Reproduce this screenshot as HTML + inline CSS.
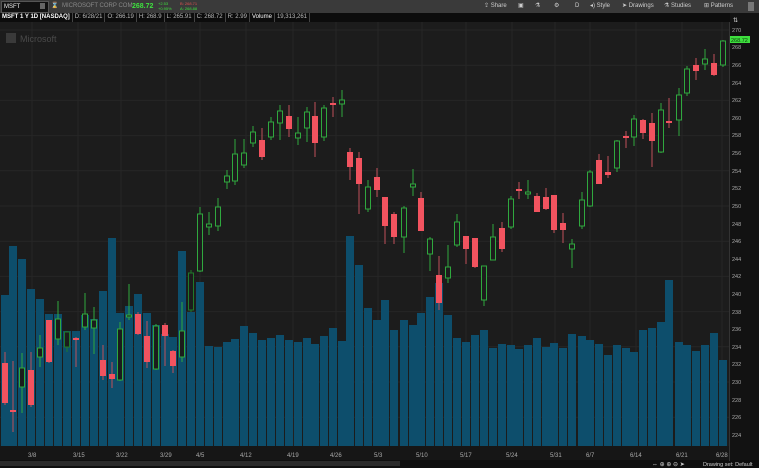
<!DOCTYPE html>
<html><head><meta charset="utf-8"><style>
html,body{margin:0;padding:0;width:759px;height:468px;overflow:hidden;background:#1b1b1b;font-family:"Liberation Sans",sans-serif}
#top{position:absolute;left:0;top:0;width:759px;height:13px;background:#3a3a3a;font-size:6px;color:#ccc}
#info{position:absolute;left:0;top:13px;width:730px;height:9px;background:#0c0c0c;font-size:6px;color:#bbb;white-space:nowrap}
#info span{display:inline-block;border-right:1px solid #444;padding:0 2px;line-height:9px}
.t{position:absolute;top:3px;line-height:7px}
svg{position:absolute;left:0;top:0}
</style></head><body>
<svg id="s" width="759" height="468" xmlns="http://www.w3.org/2000/svg">
<rect x="0" y="22" width="730" height="424" fill="#1c1c1c"/>
<rect x="730" y="13" width="29" height="448" fill="#121212"/>
<rect x="0" y="446" width="730" height="15" fill="#161616"/>
<rect x="0" y="460" width="759" height="8" fill="#0e0e0e"/>
<rect x="0" y="461" width="400" height="5" fill="#2a2a2a"/>
<g id="grid" stroke="#262626" stroke-width="1"></g>
<g id="vol" fill="#0d4e6c"></g>
<g id="c"></g>
<text x="20" y="42" font-size="9" fill="#4a4a4a">Microsoft</text>
<rect x="6" y="33" width="10" height="10" fill="#3a3a3a"/>
<g font-size="5.5" fill="#aaa" id="ax">
<text x="732" y="32">270</text><text x="732" y="49">268</text><text x="732" y="67">266</text><text x="732" y="85">264</text><text x="732" y="102">262</text><text x="732" y="120">260</text><text x="732" y="137">258</text><text x="732" y="155">256</text><text x="732" y="173">254</text><text x="732" y="190">252</text><text x="732" y="208">250</text><text x="732" y="226">248</text><text x="732" y="243">246</text><text x="732" y="261">244</text><text x="732" y="278">242</text><text x="732" y="296">240</text><text x="732" y="314">238</text><text x="732" y="331">236</text><text x="732" y="349">234</text><text x="732" y="366">232</text><text x="732" y="384">230</text><text x="732" y="402">228</text><text x="732" y="419">226</text><text x="732" y="437">224</text>
</g>
<rect x="730" y="36" width="20" height="7" fill="#3ee03e"/>
<text x="731" y="42" font-size="5.5" fill="#0a3a0a">268.72</text>
<text x="733" y="22" font-size="6" fill="#ddd">⇅</text>
<g font-size="6" fill="#aaa">
<text x="28" y="457">3/8</text><text x="73" y="457">3/15</text><text x="116" y="457">3/22</text><text x="160" y="457">3/29</text><text x="196" y="457">4/5</text><text x="240" y="457">4/12</text><text x="287" y="457">4/19</text><text x="330" y="457">4/26</text><text x="374" y="457">5/3</text><text x="416" y="457">5/10</text><text x="460" y="457">5/17</text><text x="506" y="457">5/24</text><text x="550" y="457">5/31</text><text x="586" y="457">6/7</text><text x="630" y="457">6/14</text><text x="676" y="457">6/21</text><text x="716" y="457">6/28</text>
</g>
<text x="652" y="466" font-size="6" fill="#ccc">⇔ ⊕ ⊕ ⊖ ➤</text>
<text x="703" y="466" font-size="5.5" fill="#ccc">Drawing set: Default</text>
</svg>
<div id="top">
<div style="position:absolute;left:1px;top:1px;width:44px;height:10px;background:#111;border:1px solid #555;color:#eee;font-size:6px;line-height:10px;padding-left:2px">MSFT</div>
<div style="position:absolute;left:40px;top:3px;width:5px;height:6px;background:#666"></div>
<div class="t" style="left:51px">⌛</div>
<div class="t" style="left:62px;color:#888">MICROSOFT CORP COM</div>
<div class="t" style="left:132px;color:#3ee03e;font-weight:bold;font-size:7px">268.72</div>
<div style="position:absolute;left:158px;top:2px;color:#3ee03e;font-size:4px;line-height:4.5px">+2.53<br>+0.95%</div>
<div style="position:absolute;left:180px;top:2px;color:#e05050;font-size:4px;line-height:4.5px">B: 268.71<br><span style="color:#3ee03e">A: 268.88</span></div>
<div class="t" style="left:484px">⇪ Share</div>
<div class="t" style="left:518px">▣</div>
<div class="t" style="left:535px">⚗</div>
<div class="t" style="left:554px">⚙</div>
<div class="t" style="left:575px">D</div>
<div class="t" style="left:590px">◂) Style</div>
<div class="t" style="left:622px">➤ Drawings</div>
<div class="t" style="left:664px">⚗ Studies</div>
<div class="t" style="left:704px">⊞ Patterns</div>
<div style="position:absolute;left:748px;top:2px;width:6px;height:9px;background:#777"></div>
</div>
<div id="info"><span style="color:#fff;font-weight:bold">MSFT 1 Y 1D [NASDAQ]</span><span>D: 6/28/21</span><span>O: 266.19</span><span>H: 268.9</span><span>L: 265.91</span><span>C: 268.72</span><span>R: 2.99</span><span style="color:#fff">Volume</span><span>19,313,261</span></div>
<script>
var NS="http://www.w3.org/2000/svg";
function el(p,t,a){var e=document.createElementNS(NS,t);for(var k in a)e.setAttribute(k,a[k]);p.appendChild(e);return e;}
var g=document.getElementById('grid');
[32,78,121,166,200,246,293,336,378,422,466,512,555,590,636,682,722].forEach(function(x){el(g,'line',{x1:x,y1:22,x2:x,y2:446});});
for(var y=30;y<446;y+=35.2)el(g,'line',{x1:0,y1:y,x2:730,y2:y});
el(g,'line',{x1:729.5,y1:13,x2:729.5,y2:461,stroke:'#333'});
var C=[
[5,'r',363,403,352,405],[13,'r',410,412,361,432],[22,'g',368,387,353,413],[31,'r',370,405,352,407],[40,'g',348,357,335,367],[49,'r',320,362,320,363],[58,'g',319,339,301,345],[67,'d',332,347,331,352],[76,'r',338,340,337,367],[85,'g',314,327,293,330],[94,'g',320,328,307,354],[103,'r',360,376,345,380],[112,'r',374,379,362,388],[120,'g',329,380,322,381],[129,'g',315,317,284,320],[138,'r',314,334,312,335],[147,'r',336,362,321,368],[156,'g',326,369,324,370],[165,'r',325,336,323,366],[173,'r',351,366,350,373],[182,'g',331,357,302,362],[191,'d',273,310,270,312],[200,'g',214,271,207,272],[209,'g',224,227,212,235],[218,'g',207,226,198,231],[227,'g',176,182,170,189],[235,'g',154,181,139,185],[244,'g',153,165,139,168],[253,'g',132,143,126,147],[262,'r',140,157,128,160],[271,'g',122,137,117,140],[280,'g',111,123,105,140],[289,'r',116,129,105,137],[298,'g',133,138,117,145],[307,'g',112,128,107,142],[315,'r',116,143,102,157],[324,'g',108,137,105,141],[333,'r',103,105,97,117],[342,'g',100,104,90,117],
[350,'r',152,167,148,180],[359,'r',158,184,152,214],[368,'g',187,209,180,212],[377,'r',177,190,168,197],[385,'r',197,226,197,244],[394,'r',214,237,212,244],[404,'g',208,237,206,253],[413,'g',184,187,169,196],[421,'r',198,231,192,231],[430,'g',239,254,237,271],[439,'r',275,303,256,310],[448,'g',267,278,245,283],[457,'g',222,245,214,247],[466,'r',236,249,236,264],[475,'r',238,267,238,268],[484,'g',266,300,266,306],[493,'g',237,260,224,260],[502,'r',228,249,222,252],[511,'g',199,227,196,229],[519,'r',189,191,182,199],[528,'g',192,194,180,199],[537,'r',196,212,193,212],[546,'r',197,209,188,210],[554,'r',195,230,195,233],[563,'r',223,230,213,243],[572,'g',244,249,239,268],[582,'g',200,226,192,229],[590,'g',172,206,170,207],[599,'r',160,184,154,184],[608,'r',172,175,156,178],[617,'g',141,168,140,172],[626,'r',136,138,131,148],[634,'g',119,137,115,146],[643,'r',120,133,119,139],[652,'r',123,141,113,167],[661,'g',110,152,103,153],[669,'r',121,123,98,128],[679,'g',95,120,88,136],[687,'g',69,93,66,96],[696,'r',65,71,58,80],[705,'g',59,64,49,70],[714,'r',63,75,54,76],[723,'g',41,65,40,67]];
var V=[295,246,259,289,299,314,314,331,331,315,319,291,238,313,306,294,313,325,334,337,251,312,282,346,347,342,339,326,333,340,338,335,340,342,338,344,336,328,341,236,265,308,320,300,330,320,325,313,297,283,315,338,342,335,330,348,344,345,349,345,338,347,343,348,334,336,340,344,355,345,348,352,330,328,322,280,342,345,351,345,333,360];
var vg=document.getElementById('vol'),cg=document.getElementById('c');
C.forEach(function(c,i){var x=c[0];var t=V[i]||340;el(vg,'rect',{x:x-4,y:t,width:8,height:446-t});});
C.forEach(function(c){var x=c[0],k=c[1];var col=k=='r'?'#f2535f':(k=='d'?'#1f7a2a':'#2fa83e');
el(cg,'line',{x1:x,y1:c[4],x2:x,y2:c[5],stroke:k=='r'?'#c0505a':col,'stroke-width':1});
var h=Math.max(c[3]-c[2],2);
if(k=='r')el(cg,'rect',{x:x-3,y:c[2],width:6,height:h,fill:col});
else el(cg,'rect',{x:x-2.5,y:c[2],width:5,height:h,fill:'#1c1c1c',stroke:col,'stroke-width':1});});
</script>
</body></html>
